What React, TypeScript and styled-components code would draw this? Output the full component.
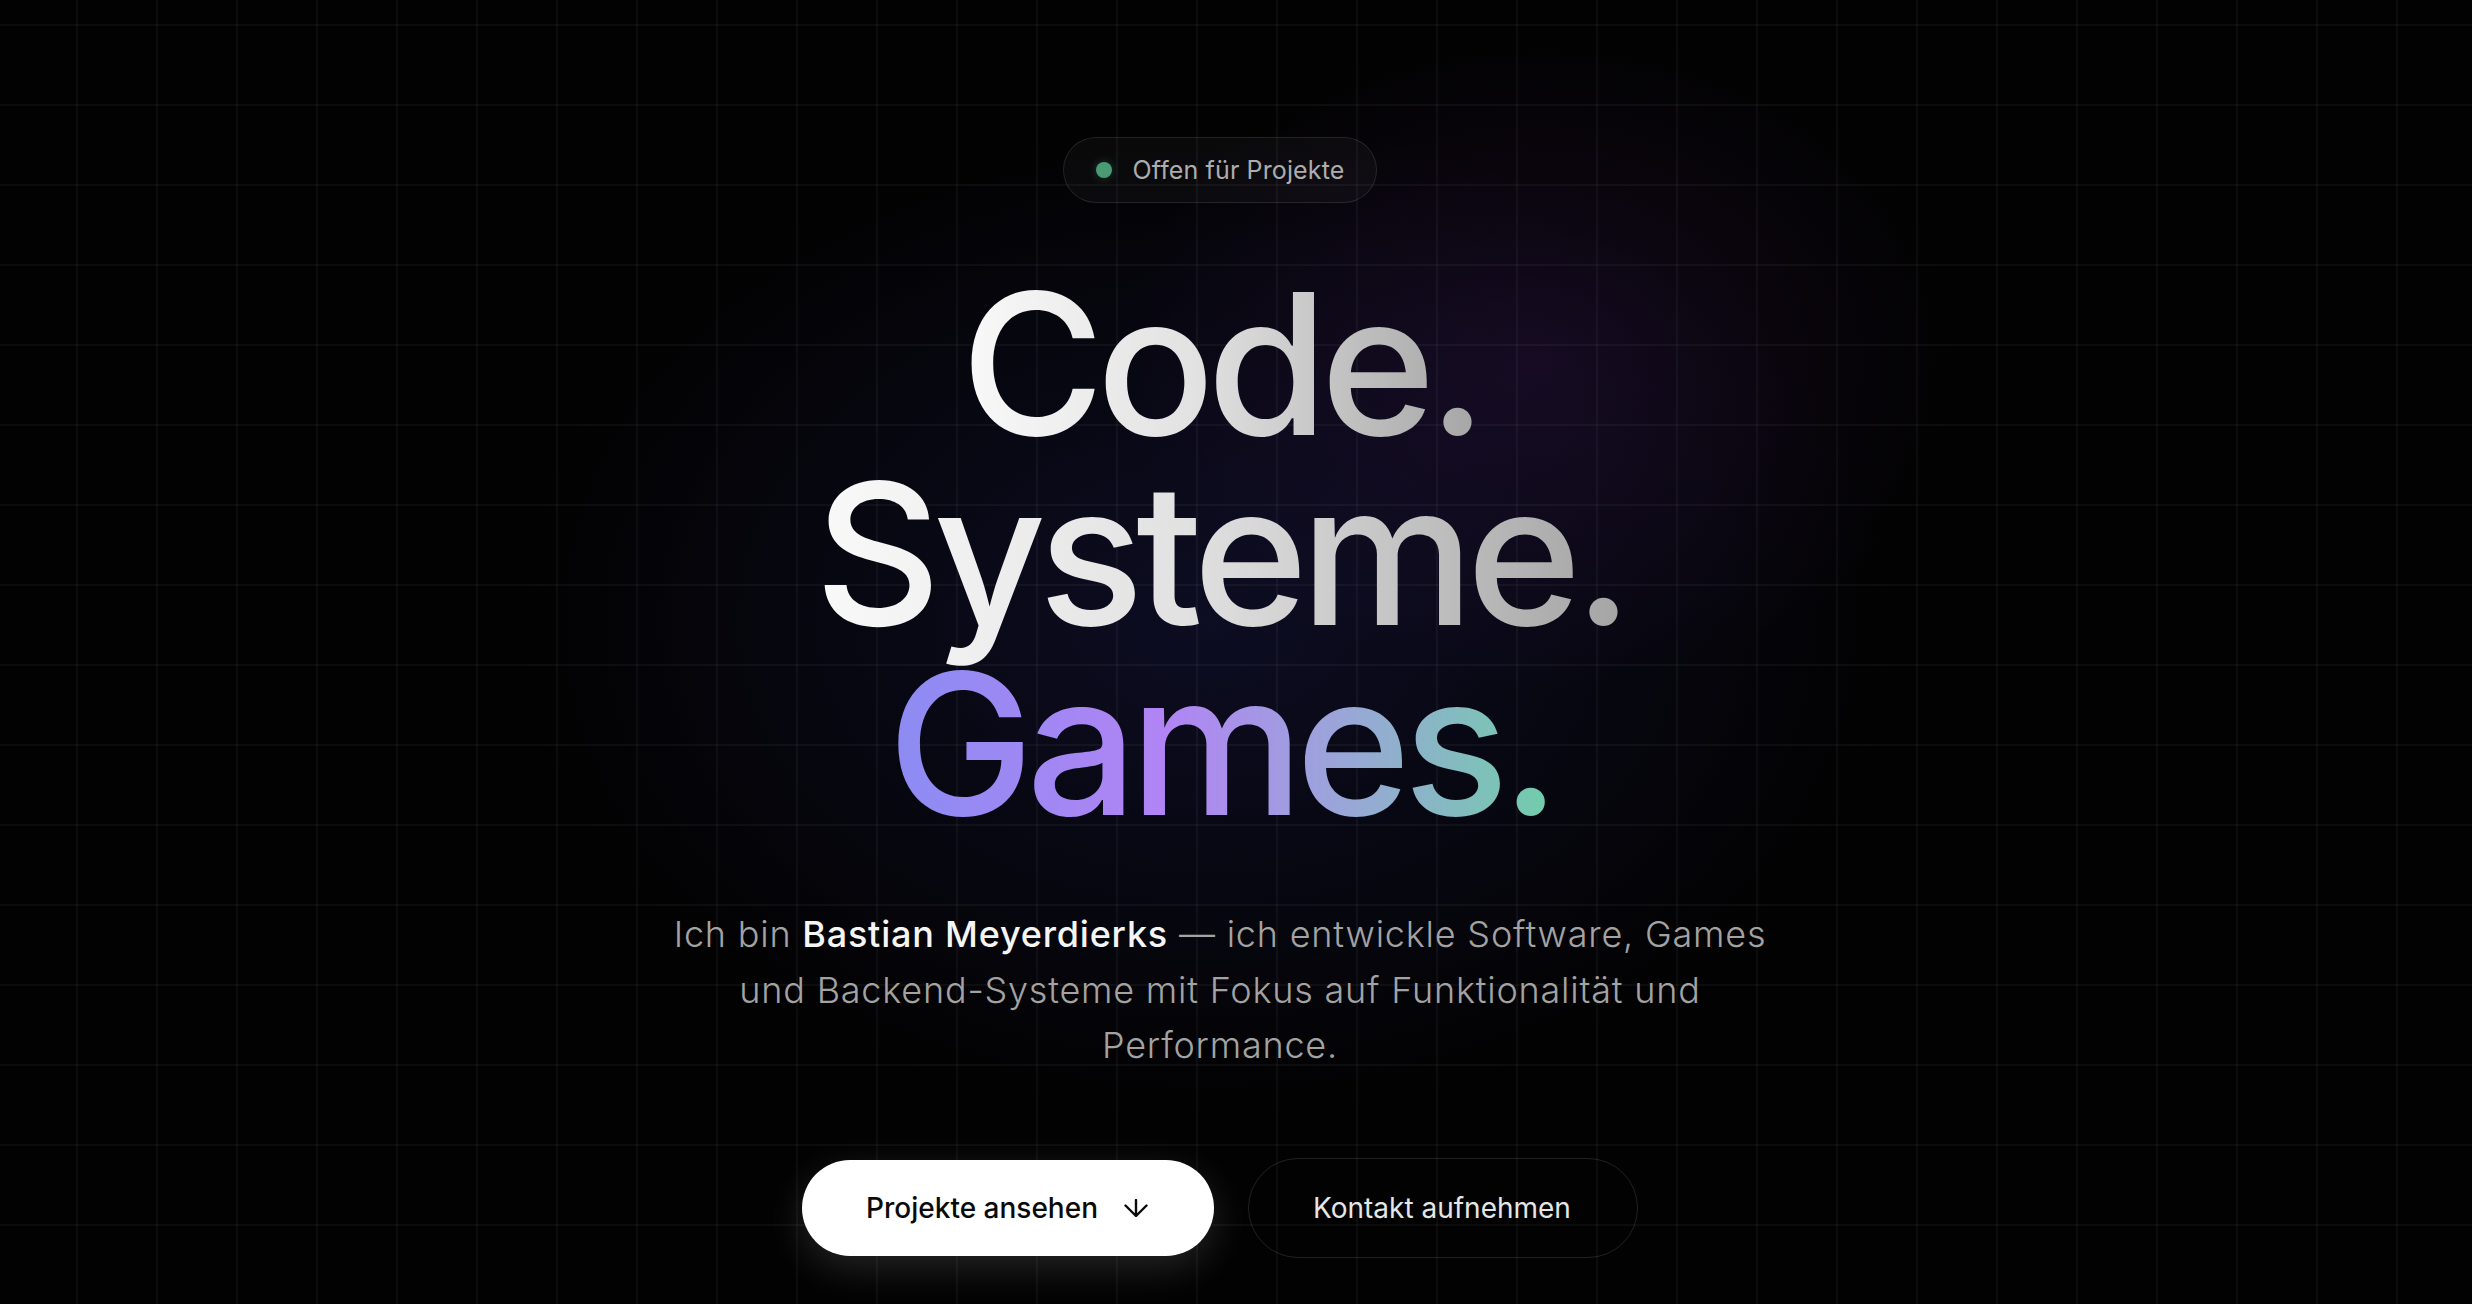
import React from 'react';
import styled, { createGlobalStyle } from 'styled-components';

const GlobalStyle = createGlobalStyle`
    html, body {
        margin: 0;
        padding: 0;
        background: #020202;
    }
    body {
        font-family: Inter, 'Noto Sans', 'Liberation Sans', sans-serif;
        -webkit-font-smoothing: antialiased;
    }
    * {
        box-sizing: border-box;
    }
`;

// grid lines on top, the soft violet glow behind the headline below them
const Page = styled.main`
    min-height: 100vh;
    display: flex;
    flex-direction: column;
    align-items: center;
    padding: 137px 32px 0 0;
    background-color: #020202;
    background-image:
        linear-gradient(to right, rgba(255, 255, 255, 0.04) 2px, transparent 2px),
        linear-gradient(to bottom, rgba(255, 255, 255, 0.04) 2px, transparent 2px),
        radial-gradient(ellipse 560px 440px at 1540px 360px, rgba(70, 28, 100, 0.26), transparent 75%),
        radial-gradient(ellipse 860px 620px at 1210px 620px, rgba(28, 28, 80, 0.42), transparent 80%);
    background-size: 80px 80px, 80px 80px, 100% 100%, 100% 100%;
    background-position: 76px 0, 0 24px, 0 0, 0 0;
`;

const Badge = styled.div`
    display: flex;
    align-items: center;
    gap: 21px;
    height: 66px;
    padding: 0 32px 0 32px;
    border-radius: 999px;
    border: 1.5px solid rgba(255, 255, 255, 0.1);
    background: rgba(255, 255, 255, 0.03);
    color: #adadad;
    font-size: 25px;
    letter-spacing: 0.005em;
`;

const Dot = styled.span`
    width: 16px;
    height: 16px;
    border-radius: 50%;
    background: #4a9a73;
    box-shadow: 0 0 10px rgba(74, 154, 115, 0.35);
`;

const Headline = styled.h1`
    margin: 66px 0 0;
    display: flex;
    flex-direction: column;
    align-items: center;
    font-size: 196px;
    font-weight: 500;
    line-height: 190px;
    letter-spacing: -0.04em;
`;

// extra bottom padding keeps descenders inside the clipped background
const Line = styled.span<{ $accent?: boolean }>`
    display: inline-block;
    padding: 0 10px 40px;
    margin-bottom: -40px;
    background-image: ${p =>
        p.$accent
            ? 'linear-gradient(90deg, #8a8cf3 0%, #b184f4 42%, #9aa6d8 68%, #6fcfa8 100%)'
            : 'linear-gradient(90deg, #fafafa 0%, #e2e2e2 45%, #a3a3a3 100%)'};
    -webkit-background-clip: text;
    background-clip: text;
    color: transparent;
`;

const Intro = styled.p`
    margin: 68px 0 0;
    max-width: 1120px;
    text-align: center;
    font-size: 36px;
    font-weight: 300;
    line-height: 55.5px;
    letter-spacing: 0.022em;
    color: #a3a3a3;

    strong {
        color: #f5f5f5;
        font-weight: 500;
    }
`;

const Actions = styled.div`
    display: flex;
    align-items: center;
    gap: 34px;
    margin-top: 84px;
`;

const Button = styled.a<{ $primary?: boolean }>`
    display: inline-flex;
    align-items: center;
    gap: 26px;
    height: ${p => (p.$primary ? '96px' : '100px')};
    padding: 0 66px 0 64px;
    border-radius: 999px;
    font-size: 28px;
    font-weight: ${p => (p.$primary ? 500 : 400)};
    text-decoration: none;
    color: ${p => (p.$primary ? '#0a0a0a' : '#e6e6e6')};
    background: ${p => (p.$primary ? '#ffffff' : 'transparent')};
    border: ${p => (p.$primary ? 'none' : '1.5px solid rgba(255, 255, 255, 0.12)')};
    box-shadow: ${p =>
        p.$primary ? '0 12px 40px rgba(255, 255, 255, 0.14)' : 'none'};
`;

const ArrowDown = () => (
    <svg width="24" height="18" viewBox="0 0 24 18" fill="none">
        <path
            d="M12 1V16.5M1.5 6.5L12 17L22.5 6.5"
            stroke="currentColor"
            strokeWidth="2.4"
            strokeLinecap="round"
            strokeLinejoin="round"
        />
    </svg>
);

export default function App() {
    return (
        <>
            <GlobalStyle />
            <Page>
                <Badge>
                    <Dot />
                    Offen für Projekte
                </Badge>
                <Headline>
                    <Line>Code.</Line>
                    <Line>Systeme.</Line>
                    <Line $accent>Games.</Line>
                </Headline>
                <Intro>
                    Ich bin <strong>Bastian Meyerdierks</strong> — ich entwickle
                    Software, Games und Backend-Systeme mit Fokus auf
                    Funktionalität und Performance.
                </Intro>
                <Actions>
                    <Button $primary href="#projekte">
                        Projekte ansehen
                        <ArrowDown />
                    </Button>
                    <Button href="#kontakt">Kontakt aufnehmen</Button>
                </Actions>
            </Page>
        </>
    );
}
